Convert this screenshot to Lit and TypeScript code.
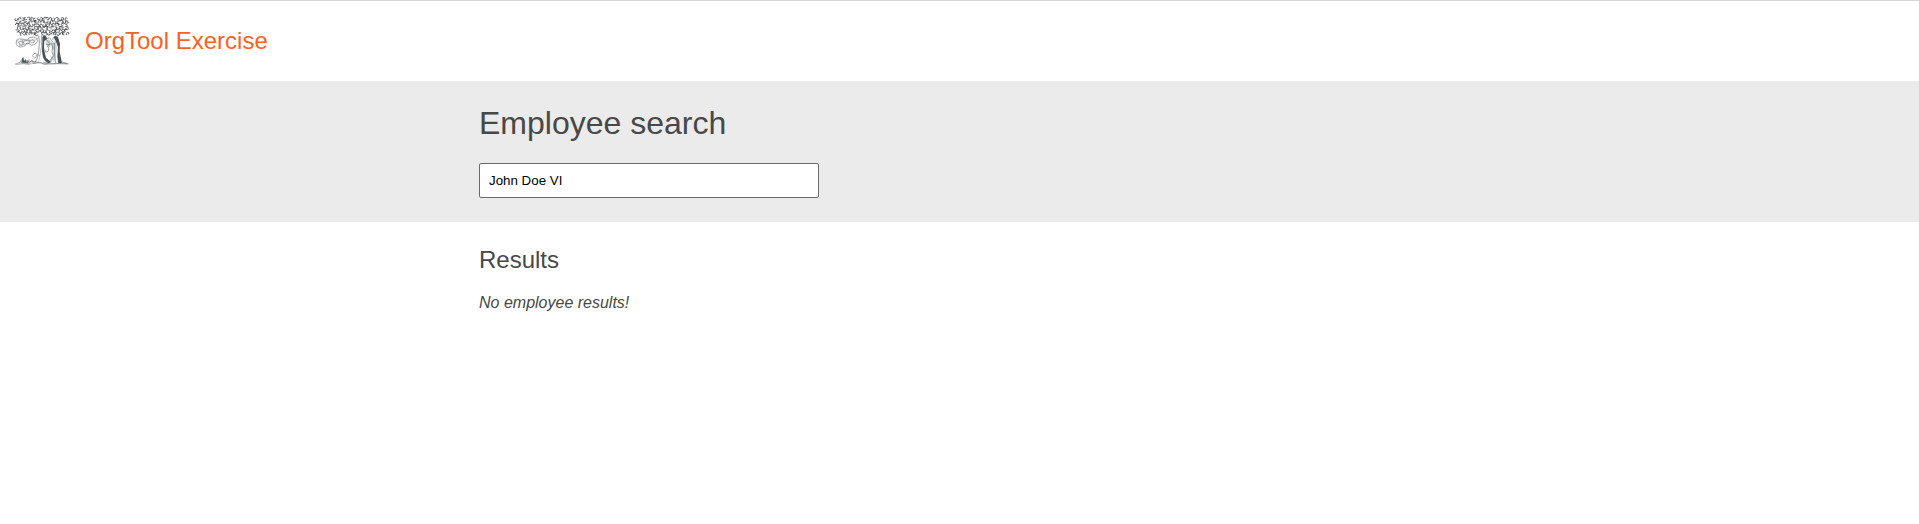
import { LitElement, html, css, svg } from "lit";
import { customElement, state } from "lit/decorators.js";

/* Small hooked leaves scattered over the crown of the tree, in rows. */
function leaves(): string {
  let d = "";
  let seed = 29;
  const rnd = () => (seed = (seed * 16807) % 2147483647) / 2147483647;
  for (let row = 0; row < 6; row++) {
    for (let col = 0; col < 17; col++) {
      const x = 6 + col * 9.2 + (row % 2) * 4 + rnd() * 3 - 2;
      const y = 6 + row * 9 + rnd() * 3 - 1.5;
      if (row === 5 && (col < 1 || (col > 6 && col < 8))) continue;
      const a = rnd() * Math.PI * 2;
      const px = (r: number, t: number) =>
        `${(x + r * Math.cos(a + t)).toFixed(1)} ${(y + r * Math.sin(a + t)).toFixed(1)}`;
      d += `M${px(4.8, 0)}Q${px(6.2, 1.3)} ${px(4.2, 2.4)}T${px(3.6, 4.4)}`;
    }
  }
  return d;
}

const LEAVES = leaves();

@customElement("tree-logo")
export class TreeLogo extends LitElement {
  static styles = css`
    :host { display: block; width: 54px; height: 48px; flex: none; }
    svg { display: block; width: 100%; height: 100%; overflow: visible; }
    .line { fill: none; stroke: #4c5356; stroke-width: 1.6; stroke-linecap: round; }
    .leaf { fill: none; stroke: #2c3133; stroke-width: 2.3; }
    .soft { fill: none; stroke: #959a9d; stroke-width: 1.7; }
    .dark { fill: #4a5257; }
    .pale { fill: #d3d6d7; }
  `;

  render() {
    return html`<svg viewBox="0 0 162 144" aria-hidden="true">
      ${svg`
        <path class="leaf" d=${LEAVES} />
        <path class="line" d="M4 70Q13 61 24 67T44 62Q58 57 65 66T59 82Q50 88 43 81T29 87Q15 94 7 86T6 71" />
        <path class="line" d="M10 77Q18 70 25 76T18 84Q12 84 13 79M28 72Q38 67 43 73T33 81M47 70Q54 65 58 71T50 78M21 68Q27 72 23 79M41 67L47 76" />
        <path class="soft" d="M8 73L62 69M12 86L42 78M61 66Q70 66 75 58" />
        <path class="line" d="M69 55Q75 66 73 82T70 110Q68 127 60 137M80 56Q77 73 81 94T91 132L101 139" />
        <path class="soft" d="M75 91Q79 104 74 121T69 137" />
        <path class="dark" d="M82 61Q86 51 92 57Q98 62 95 68L88 72Q86 86 88 101L93 122L107 134L103 139Q90 135 84 121Q79 101 82 80Z" />
        <path class="pale" d="M92 70L102 66L111 78L106 89L98 92L93 84Z" />
        <path class="line" d="M92 67L103 62L114 76M93 82Q103 88 110 79M101 92Q103 103 96 105T90 99M96 70L104 79L98 89" />
        <path class="pale" d="M114 74L122 72L126 92L121 128L116 136L111 128L115 102Z" />
        <path class="line" d="M113 68Q118 51 128 60L128 73M114 78L111 104L115 116L106 137M119 79L118 108L122 137M110 82L115 96" />
        <path class="dark" d="M116 61Q124 52 130 64L135 80L134 104L141 138L130 139L127 119L129 91L123 74Z" />
        <path class="line" d="M55 112Q49 116 56 121M58 110Q66 106 65 115T58 124M68 113L73 116M102 136L111 122L107 118" />
        <path class="dark" d="M19 138L21 125L25 119L27 133L31 125L34 134L41 131L39 139Z" />
        <path class="line" d="M13 137L20 128M33 132L43 129M43 138L51 129L55 138M38 135L64 133" />
        <path class="soft" d="M1 140Q17 132 32 138T68 136L91 140L160 139" />
        <path class="line" d="M2 142L24 140L43 142M55 139L77 137L87 142L100 141M104 141L130 140L159 141M86 136L96 139M137 134L155 139" />
      `}
    </svg>`;
  }
}

@customElement("app-root")
export class AppRoot extends LitElement {
  @state() private query = "John Doe VI";

  static styles = css`
    :host {
      display: block;
      min-height: 100vh;
      box-sizing: border-box;
      border-top: 1px solid #d4d4d9;
      background: #fff;
      color: #484848;
      font-family: "Liberation Sans", Arial, sans-serif;
      font-size: 16px;
    }
    .header {
      display: flex;
      align-items: center;
      gap: 16px;
      height: 80px;
      padding-left: 15px;
      box-sizing: border-box;
    }
    .title { color: #ff5f1f; font-size: 24px; line-height: 27px; padding-bottom: 2px; }
    .search { background: #ebebeb; padding: 24px 479px; }
    .results { padding: 24px 479px; }
    h1, h2, p { margin: 0; font-weight: 400; }
    h1 { font-size: 32px; line-height: 36px; margin-bottom: 22px; }
    h2 { font-size: 24px; line-height: 27px; margin-bottom: 21px; }
    .field {
      display: block;
      box-sizing: border-box;
      width: 340px;
      height: 35px;
      margin: 0;
      padding: 0 9px;
      border: 1px solid #6b6b6b;
      border-radius: 2px;
      outline: none;
      background: #fff;
      color: #000;
      font: 13.333px "Liberation Sans", Arial, sans-serif;
    }
    .empty { font-style: italic; line-height: 18px; }
  `;

  private onInput(e: Event) {
    this.query = (e.target as HTMLInputElement).value;
  }

  render() {
    return html`
      <header class="header">
        <tree-logo></tree-logo>
        <span class="title">OrgTool Exercise</span>
      </header>
      <section class="search">
        <h1>Employee search</h1>
        <input class="field" type="text" .value=${this.query} @input=${this.onInput} />
      </section>
      <section class="results">
        <h2>Results</h2>
        <p class="empty">No employee results!</p>
      </section>
    `;
  }
}
